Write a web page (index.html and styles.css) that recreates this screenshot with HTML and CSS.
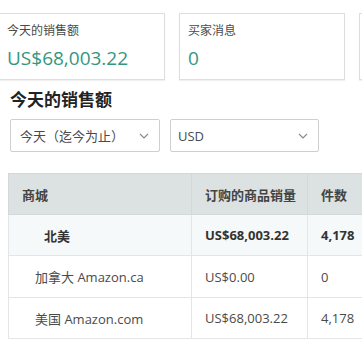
FILE: index.html
```html
<!DOCTYPE html>
<html lang="zh">
<head>
<meta charset="utf-8">
<link rel="stylesheet" href="styles.css">
</head>
<body>
<div class="cards">
  <div class="card first">
    <div class="card-label">今天的销售额</div>
    <div class="card-value">US$68,003.22</div>
  </div>
  <div class="card">
    <div class="card-label">买家消息</div>
    <div class="card-value">0</div>
  </div>
  <div class="card"></div>
</div>
<h2 class="title">今天的销售额</h2>
<div class="filters">
  <div class="select">
    <span>今天（迄今为止）</span>
    <svg class="chev" width="10" height="6" viewBox="0 0 10 6"><path d="M1 1l4 4 4-4" fill="none" stroke="#8a8a8a" stroke-width="1.2"/></svg>
  </div>
  <div class="select">
    <span>USD</span>
    <svg class="chev" width="10" height="6" viewBox="0 0 10 6"><path d="M1 1l4 4 4-4" fill="none" stroke="#8a8a8a" stroke-width="1.2"/></svg>
  </div>
</div>
<div class="table-wrap">
<table class="grid">
  <thead>
    <tr><th class="c1">商城</th><th class="c2">订购的商品销量</th><th class="c3">件数</th></tr>
  </thead>
  <tbody>
    <tr class="group"><td class="c1 indent">北美</td><td>US$68,003.22</td><td>4,178</td></tr>
    <tr><td class="c1 sub">加拿大 Amazon.ca</td><td>US$0.00</td><td>0</td></tr>
    <tr><td class="c1 sub">美国 Amazon.com</td><td>US$68,003.22</td><td>4,178</td></tr>
  </tbody>
</table>
</div>
</body>
</html>
```

FILE: styles.css
```css
html, body {
  margin: 0;
  padding: 0;
  background: #fff;
  overflow: hidden;
}
body {
  width: 362px;
  height: 346px;
  font-family: "Open Sans", "Noto Sans CJK SC", sans-serif;
  color: #333;
}
.cards {
  display: flex;
  gap: 14px;
  padding-top: 13px;
  height: 69px;
  overflow: hidden;
}
.card {
  flex: 0 0 auto;
  width: 166px;
  height: 67px;
  box-sizing: border-box;
  border: 1px solid #dedede;
  box-shadow: 0 1px 1px rgba(0,0,0,0.06);
  padding: 7px 8px 0;
}
.card.first {
  width: 165px;
  border-left: none;
  padding-left: 7px;
}
.card-label {
  font-size: 12px;
  line-height: 20px;
  color: #4a4a4a;
}
.card-value {
  margin-top: 4px;
  font-size: 19px;
  line-height: 26px;
  color: #33977f;
}
.title {
  margin: 6px 0 0 10px;
  font-size: 17px;
  line-height: 24px;
  font-weight: 700;
  color: #222;
}
.filters {
  display: flex;
  gap: 10px;
  margin: 7px 0 0 10px;
}
.select {
  width: 150px;
  height: 33px;
  box-sizing: border-box;
  border: 1px solid #cfcfcf;
  border-radius: 2px;
  display: flex;
  align-items: center;
  justify-content: space-between;
  padding: 0 10px 0 9px;
  font-size: 13px;
  color: #4a4a4a;
}
.select:nth-child(2) { width: 149px; padding-left: 7px; }
.chev { margin-top: 1px; }
.table-wrap {
  margin: 21px 0 0 8px;
  width: 354px;
  overflow: hidden;
}
.grid {
  border-collapse: collapse;
  width: 400px;
  font-size: 13px;
}
.grid th, .grid td {
  height: 41px;
  padding: 0 0 0 13px;
  text-align: left;
  border: 1px solid #e3e6e6;
  box-sizing: border-box;
}
.grid th {
  background: #dce1e1;
  font-weight: 600;
  color: #444;
  border-color: #d3d8d8;
}
.grid .c1 { width: 183px; }
.grid .c2 { width: 116px; }
.grid td { color: #4a4a4a; }
.grid .group td {
  background: #f6f9f9;
  font-weight: 700;
  color: #333;
}
.grid .indent { padding-left: 35px; }
.grid .sub { padding-left: 26px; }
.grid tbody tr:nth-child(2) td { height: 42px; }
```
